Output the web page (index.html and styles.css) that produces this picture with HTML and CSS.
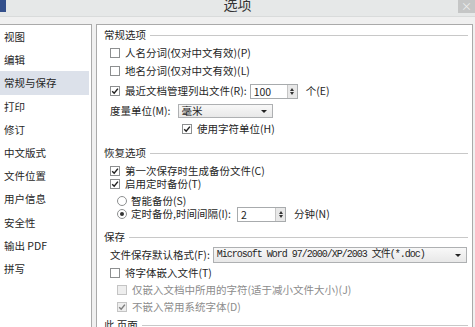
FILE: index.html
```html
<!DOCTYPE html>
<html lang="zh">
<head>
    <meta charset="UTF-8">
    <title>选项</title>
    <link rel="stylesheet" href="styles.css">
</head>
<body>
    <div class="titlebar">
        <span class="app-mark"></span>
        <span class="title">选项</span>
        <span class="close">×</span>
    </div>

    <div class="dialog">
        <!-- 左侧分类 -->
        <ul class="nav">
            <li>视图</li>
            <li>编辑</li>
            <li class="active">常规与保存</li>
            <li>打印</li>
            <li>修订</li>
            <li>中文版式</li>
            <li>文件位置</li>
            <li>用户信息</li>
            <li>安全性</li>
            <li>输出 PDF</li>
            <li>拼写</li>
        </ul>

        <!-- 右侧设置 -->
        <div class="pane">
            <div class="group-title">常规选项</div>
            <div class="row in1"><span class="box"></span>人名分词(仅对中文有效)(P)</div>
            <div class="row in1"><span class="box"></span>地名分词(仅对中文有效)(L)</div>
            <div class="row in1 field">
                <span class="box checked"><svg viewBox="0 0 8 8"><path d="M1.2 4.2 L3.2 6.2 L6.9 1.6"/></svg></span>最近文档管理列出文件(R):
                <span class="spin spin-recent"><span class="spin-val">100</span><span class="spin-btn"><i class="up"></i><i class="down"></i></span></span>
                <span class="after">个(E)</span>
            </div>
            <div class="row in1 field">
                度量单位(M):
                <span class="select select-unit"><span class="select-val">毫米</span><i class="arrow"></i></span>
            </div>
            <div class="row in-unit"><span class="box checked"><svg viewBox="0 0 8 8"><path d="M1.2 4.2 L3.2 6.2 L6.9 1.6"/></svg></span>使用字符单位(H)</div>

            <div class="group-title section">恢复选项</div>
            <div class="row in1"><span class="box checked"><svg viewBox="0 0 8 8"><path d="M1.2 4.2 L3.2 6.2 L6.9 1.6"/></svg></span>第一次保存时生成备份文件(C)</div>
            <div class="row in1 tight"><span class="box checked"><svg viewBox="0 0 8 8"><path d="M1.2 4.2 L3.2 6.2 L6.9 1.6"/></svg></span>启用定时备份(T)</div>
            <div class="row in2 sub-opt"><span class="radio"></span>智能备份(S)</div>
            <div class="row in2 tight">
                <span class="radio on"></span>定时备份,时间间隔(I):
                <span class="spin spin-minutes"><span class="spin-val">2</span><span class="spin-btn"><i class="up"></i><i class="down"></i></span></span>
                <span class="after">分钟(N)</span>
            </div>

            <div class="group-title section-s">保存</div>
            <div class="row in1">
                文件保存默认格式(F):
                <span class="select select-format"><span class="select-val mono">Microsoft Word 97/2000/XP/2003 文件(*.doc)</span><i class="arrow"></i></span>
            </div>
            <div class="row in1"><span class="box"></span>将字体嵌入文件(T)</div>
            <div class="row in2 sub-opt disabled"><span class="box"></span>仅嵌入文档中所用的字符(适于减小文件大小)(J)</div>
            <div class="row in2 sub-opt disabled"><span class="box checked"><svg viewBox="0 0 8 8"><path d="M1.2 4.2 L3.2 6.2 L6.9 1.6"/></svg></span>不嵌入常用系统字体(D)</div>

            <div class="group-title">此 页面</div>
        </div>
    </div>
</body>
</html>
```

FILE: styles.css
```css
body {
    margin: 0;
    width: 475px;
    height: 327px;
    overflow: hidden;
    background-color: #f0f0f0;
    font-family: "Noto Sans CJK SC", "Liberation Sans", sans-serif;
    font-size: 10.5px;
    color: #262626;
}

.titlebar {
    display: grid;
    grid-template-columns: 1fr auto 1fr;
    height: 16px;
    background-color: #e6e8e8;
    border-bottom: 1px solid #d9dbdb;
    overflow: hidden;
}

.app-mark {
    width: 6px;
    height: 12px;
    background-color: #34508c;
}

.title {
    font-size: 14px;
    line-height: 14px;
    margin-top: -3px;
    color: #333;
}

.close {
    justify-self: end;
    width: 17px;
    height: 13px;
    background-color: #c5c6c6;
    color: #eee;
    font-size: 11px;
    line-height: 13px;
    text-align: center;
}

.dialog {
    display: flex;
    gap: 4px;
    margin-top: 7px;
    height: 310px;
}

/* 左侧分类 */
.nav {
    list-style: none;
    margin: 0;
    padding: 0;
    width: 91px;
    flex-shrink: 0;
    background-color: #fff;
    border-top: 1px solid #aaa;
    border-right: 1px solid #aaa;
}

.nav li {
    height: 23.2px;
    line-height: 23.2px;
    padding-left: 4px;
    margin-right: 2px;
}

.nav li.active {
    background-color: #dce1ea;
}

/* 右侧设置 */
.pane {
    flex: 1;
    margin-right: 2px;
    padding: 4px 4px 0 7px;
    background-color: #fff;
    border: 1px solid #aaa;
}

.group-title {
    display: flex;
    align-items: center;
    height: 12px;
    line-height: 12px;
    margin-top: 6px;
}

.group-title:first-child {
    margin-top: 0;
}

.group-title::after {
    content: "";
    flex: 1;
    margin-left: 4px;
    border-top: 1px solid #c8c8c8;
}

.group-title.section {
    margin-top: 12px;
}

.group-title.section-s {
    margin-top: 11px;
}

.row {
    display: flex;
    align-items: center;
    height: 12px;
    line-height: 12px;
    margin-top: 6px;
    white-space: nowrap;
}

.row.field {
    margin-top: 8px;
}

.row.tight {
    margin-top: 1px;
}

.row.sub-opt {
    margin-top: 5px;
}

.in1 {
    padding-left: 6px;
}

.in2 {
    padding-left: 13px;
}

.in-unit {
    padding-left: 78px;
}

.disabled {
    color: #8c8c8c;
}

.box {
    box-sizing: border-box;
    width: 10px;
    height: 10px;
    margin-right: 5px;
    border: 1px solid #8d8f90;
    background-color: #fff;
    flex-shrink: 0;
}

.box svg {
    display: block;
    width: 8px;
    height: 8px;
    fill: none;
    stroke: #222;
    stroke-width: 1.5;
}

.disabled .box {
    border-color: #c4c4c4;
    background-color: #eeeeee;
}

.disabled .box svg {
    stroke: #7f7f7f;
}

.radio {
    box-sizing: border-box;
    width: 10px;
    height: 10px;
    margin-right: 4px;
    border: 1px solid #8d8f90;
    border-radius: 50%;
    background-color: #fff;
    display: flex;
    align-items: center;
    justify-content: center;
}

.radio.on::after {
    content: "";
    width: 4px;
    height: 4px;
    border-radius: 50%;
    background-color: #333;
}

.spin {
    box-sizing: border-box;
    display: flex;
    height: 15px;
    margin-left: 3px;
    border: 1px solid #a8abad;
    background-color: #fff;
}

.spin-recent {
    width: 48px;
}

.spin-minutes {
    width: 49px;
    margin-left: 6px;
}

.spin-val {
    flex: 1;
    padding-left: 3px;
    line-height: 13px;
}

.spin-btn {
    width: 9px;
    display: flex;
    flex-direction: column;
    align-items: center;
    justify-content: center;
    gap: 1px;
    border-left: 1px solid #c6c6c6;
    background-color: #e8e8e8;
}

.spin-btn i {
    width: 0;
    height: 0;
    border-left: 2px solid transparent;
    border-right: 2px solid transparent;
}

.spin-btn .up {
    border-bottom: 3px solid #333;
}

.spin-btn .down {
    border-top: 3px solid #333;
}

.after {
    margin-left: 8px;
}

.select {
    box-sizing: border-box;
    display: flex;
    align-items: center;
    height: 14px;
    border: 1px solid #aeb0b2;
    background: linear-gradient(#f8f8f8, #e8e8e8);
}

.select-unit {
    width: 95px;
    margin-left: 7px;
}

.select-format {
    width: 254px;
    height: 16px;
    margin-left: 3px;
}

.select-val {
    flex: 1;
    padding-left: 3px;
}

.mono {
    font-family: "Liberation Mono", "Noto Sans CJK SC", monospace;
    font-size: 10px;
    letter-spacing: -1px;
}

.arrow {
    width: 0;
    height: 0;
    margin-right: 5px;
    border-left: 3px solid transparent;
    border-right: 3px solid transparent;
    border-top: 3px solid #222;
}
```
